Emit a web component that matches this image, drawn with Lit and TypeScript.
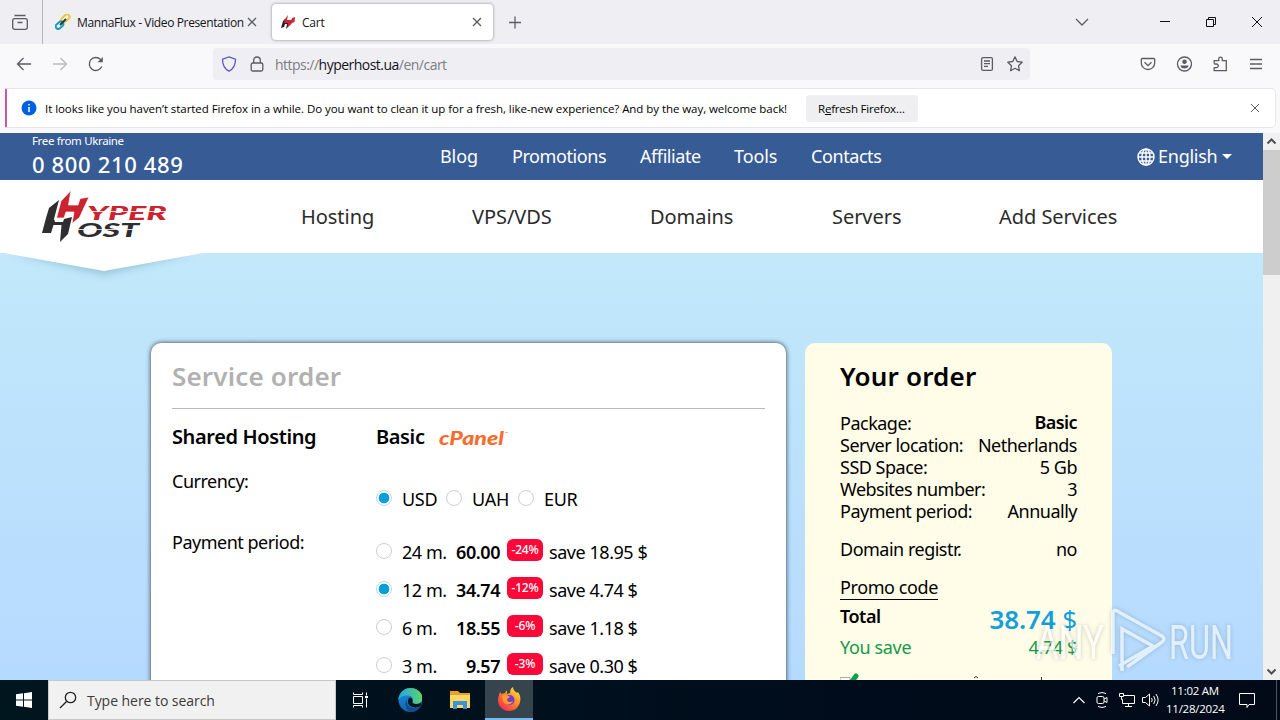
import { LitElement, html, svg, css } from 'lit';
import { customElement } from 'lit/decorators.js';
import { classMap } from 'lit/directives/class-map.js';

@customElement('browser-bar')
export class BrowserBar extends LitElement {
  static styles = css`
    :host {
      display: block;
      height: 133px;
      background: #f9f9fb;
      color: #15141a;
      font-family: 'Open Sans', 'Noto Sans', sans-serif;
      font-size: 12px;
    }
    svg {
      display: block;
      flex: none;
      fill: none;
      stroke: #5b5b66;
      stroke-width: 1.3;
    }
    .tabs {
      display: flex;
      height: 44px;
      background: #efeff3;
    }
    .view {
      box-sizing: border-box;
      width: 43px;
      padding: 14px 0 0 12px;
      border-right: 1px solid #b5b5bb;
    }
    .tab {
      display: flex;
      align-items: center;
      box-sizing: border-box;
      height: 36px;
      margin: 4px 0 0;
    }
    .tab svg {
      margin-right: 6px;
    }
    .tab.first {
      width: 223px;
      margin-left: 5px;
      padding-left: 7px;
    }
    .tab.current {
      width: 221px;
      margin-left: 1px;
      padding-left: 8px;
      border-radius: 4px;
      background: #fff;
      box-shadow: 0 0 3px rgba(0, 0, 0, 0.45);
    }
    .title {
      flex: none;
      white-space: nowrap;
    }
    .first .title {
      width: 170px;
      letter-spacing: -0.37px;
    }
    .current .title {
      width: 170px;
      letter-spacing: -0.2px;
    }
    .tab .close {
      margin: 0;
    }
    .plus {
      margin: 16px 0 0 16px;
    }
    .window {
      display: flex;
      margin: 14px 15px 0 auto;
    }
    .window svg {
      stroke: #111;
      stroke-width: 1;
    }
    .window .down {
      margin-right: 68px;
      stroke: #5b5b66;
      stroke-width: 1.3;
    }
    .window .min,
    .window .max {
      margin-right: 30px;
    }
    .tools {
      display: flex;
      align-items: center;
      height: 40px;
      padding: 0 16px;
    }
    .tools .reload {
      margin-left: 20px;
    }
    .tools .forward {
      margin-left: 20px;
      opacity: 0.4;
    }
    .address {
      display: flex;
      align-items: center;
      box-sizing: border-box;
      width: 817px;
      height: 32px;
      margin: 0 auto 0 109px;
      padding: 0 7px 0 8px;
      background: #efeff3;
      border-radius: 4px;
    }
    .lock {
      margin: 0 10px 0 12px;
    }
    .url {
      flex: 1;
      color: #7d7d85;
      font-size: 14px;
      letter-spacing: -0.52px;
    }
    .url b {
      color: #15141a;
      font-weight: 400;
    }
    .star {
      margin-left: 12px;
    }
    .menu {
      display: flex;
      gap: 20px;
    }
    .notice {
      display: flex;
      align-items: center;
      box-sizing: border-box;
      height: 40px;
      margin: 4px 4px 0 5px;
      padding-left: 14px;
      border: 1px solid #e6e6ea;
      border-left: 2px solid #d0549c;
      border-radius: 2px 5px 5px 2px;
      background: #fff;
      color: #000;
    }
    .notice .message {
      flex: none;
      width: 761px;
      margin-left: 8px;
      white-space: nowrap;
      font-size: 11.5px;
      letter-spacing: -0.055px;
    }
    .notice .refresh {
      box-sizing: border-box;
      width: 112px;
      height: 27px;
      padding-left: 12px;
      border-radius: 4px;
      background: #efeff1;
      line-height: 28px;
      font-size: 11.5px;
      letter-spacing: -0.2px;
      white-space: nowrap;
    }
    .notice .dismiss {
      margin: 0 15px 0 auto;
      stroke-width: 1;
    }
  `;

  render() {
    return html`
      <div class="tabs">
        <div class="view">
          <svg width="16" height="17" viewBox="0 0 16 17">
            <rect x=".7" y="4.7" width="14.6" height="10.6" rx="2" />
            <path d="M2.5 1.5h11M5.5 8.5h5" />
          </svg>
        </div>
        <div class="tab first">
          <svg width="16" height="16" viewBox="0 0 16 16">
            <rect x="8" y="-.2" width="5" height="9" rx="2.5" transform="rotate(48 10.5 4.3)" stroke="#e9c93c" stroke-width="2" />
            <rect x="2" y="7" width="5" height="8.4" rx="2.5" transform="rotate(48 4.5 11.2)" stroke="#1a9db8" stroke-width="2" />
            <path d="M5 11l6-6" stroke="#33343c" stroke-width="1.8" />
          </svg>
          <span class="title">MannaFlux - Video Presentation</span>
          <svg class="close" width="10" height="10" viewBox="0 0 10 10"><path d="M1 1l8 8M9 1l-8 8" /></svg>
        </div>
        <div class="tab current">
          <svg width="16" height="16" viewBox="0 0 16 16">
            <path d="M5 5L3 7 1 14l3-1 1-3h2l-1 5 3-3 1-4" fill="#2b2024" stroke="none" />
            <path d="M8 1L5 5 4 9h4l-.5 4 3-2 1.500-2 2.500-1 .5-5-3 1-.5 2H7z" fill="#c6283a" stroke="none" />
          </svg>
          <span class="title">Cart</span>
          <svg class="close" width="10" height="10" viewBox="0 0 10 10"><path d="M1 1l8 8M9 1l-8 8" /></svg>
        </div>
        <svg class="plus" width="12" height="13" viewBox="0 0 12 13"><path d="M6 .5v12M0 6.500h12" /></svg>
        <div class="window">
          <svg class="down" width="14" height="14" viewBox="0 0 14 14"><path d="M1 5l6 6 6-6" /></svg>
          <svg class="min" width="16" height="14" viewBox="0 0 16 14"><path d="M3 7.500h10" /></svg>
          <svg class="max" width="16" height="16" viewBox="0 0 16 16">
            <path d="M3.500 5.500h7v7h-7zM5.500 5.500v-2h7v7h-2" />
          </svg>
          <svg width="16" height="16" viewBox="0 0 16 16"><path d="M3 3l10 10M13 3L3 13" /></svg>
        </div>
      </div>
      <div class="tools">
        <svg width="16" height="16" viewBox="0 0 16 16"><path d="M15 8H1.500M7.500 2l-6 6 6 6" /></svg>
        <svg class="forward" width="16" height="16" viewBox="0 0 16 16"><path d="M1 8h13.500M8.500 2l6 6-6 6" /></svg>
        <svg class="reload" width="16" height="16" viewBox="0 0 16 16">
          <path d="M13.800 10.500A6.500 6.500 0 1 1 12.500 3.500L14 5" />
          <path d="M14.800 1v5.200H9.600z" fill="#5b5b66" stroke="none" />
        </svg>
        <div class="address">
          <svg width="16" height="16" viewBox="0 0 16 16">
            <path stroke="#5a58c0" d="M8 .9l6.500 2.300c0 5.200-1.500 9.400-6.500 12C3 12.600 1.500 8.400 1.500 3.200z" />
          </svg>
          <svg class="lock" width="16" height="16" viewBox="0 0 16 16">
            <rect x="2.200" y="7" width="11.600" height="8" rx="1.500" />
            <path d="M4.700 7V4.300a3.300 3.300 0 0 1 6.600 0V7" />
          </svg>
          <span class="url">https://<b>hyperhost.ua</b>/en/cart</span>
          <svg width="16" height="16" viewBox="0 0 16 16">
            <rect x="2.600" y="1.600" width="10.800" height="12.800" rx="1.500" />
            <path d="M5 5h6M5 7.700h6M5 10.400h4" />
          </svg>
          <svg class="star" width="16" height="16" viewBox="0 0 16 16">
            <path stroke-linejoin="round" d="M8 .9l2.200 4.600 5 .7-3.700 3.500.9 5L8 12.300l-4.400 2.400.9-5L.8 6.200l5-.7z" />
          </svg>
        </div>
        <div class="menu">
          <svg width="16" height="16" viewBox="0 0 16 16">
            <path d="M2.300 2.500h11.400c.7 0 1 .4 1 1V7A6.700 6.500 0 0 1 1.300 7V3.500c0-.6.3-1 1-1zM4.500 6.300L8 9.600l3.500-3.300" />
          </svg>
          <svg width="16" height="16" viewBox="0 0 16 16">
            <circle cx="8.500" cy="8" r="7" />
            <circle cx="8.500" cy="5.800" r="2.300" fill="#5b5b66" stroke="none" />
            <path d="M4.300 9.500h8.400c-.5 2-2 3-4.200 3s-3.700-1-4.200-3z" fill="#5b5b66" stroke="none" />
          </svg>
          <svg width="16" height="16" viewBox="0 0 16 16">
            <path d="M2.200 7.500V4.700h4.500V3a1.800 1.800 0 0 1 3.600 0v1.700h4v10H2.200v-3h2.200a1.800 1.800 0 0 0 0-3.700H2.200" />
          </svg>
          <svg width="16" height="16" viewBox="0 0 16 16"><path d="M2 3.500h12M2 8h12M2 12.500h12" /></svg>
        </div>
      </div>
      <div class="notice">
        <svg width="16" height="16" viewBox="0 0 16 16">
          <circle cx="8" cy="8" r="7.500" fill="#0060df" stroke="none" />
          <path d="M8 7v5M8 4v1.600" stroke="#fff" stroke-width="1.500" />
        </svg>
        <span class="message">It looks like you haven’t started Firefox in a while. Do you want to clean it up for a fresh, like-new experience? And by the way, welcome back!</span>
        <span class="refresh">R<u>e</u>fresh Firefox…</span>
        <svg class="dismiss" width="10" height="10" viewBox="0 0 10 10"><path d="M1 1l8 8M9 1l-8 8" /></svg>
      </div>
    `;
  }
}

interface Period {
  term: string;
  price: string;
  off: string;
  save: string;
  checked?: boolean;
}

@customElement('cart-page')
export class CartPage extends LitElement {
  static styles = css`
    :host {
      display: flex;
      height: 547px;
      overflow: hidden;
      font-family: 'Noto Sans', sans-serif;
      font-size: 18px;
      letter-spacing: -0.5px;
      color: #000;
    }
    .page {
      width: 1263px;
      background: linear-gradient(#c2e8fa 120px, #b5daff 547px);
    }
    .top {
      display: grid;
      grid-template-columns: 408px 72px 128px 94px 77px 326px 1fr;
      height: 47px;
      padding-left: 32px;
      background: #375b95;
      color: #fff;
      letter-spacing: -0.42px;
      line-height: 47px;
      white-space: nowrap;
    }
    .top .short {
      letter-spacing: -0.1px;
    }
    .phone {
      font-size: 22px;
      font-weight: 500;
      line-height: 30px;
      letter-spacing: 0.65px;
    }
    .phone small {
      display: block;
      height: 16px;
      font-size: 11.5px;
      font-weight: 400;
      line-height: 16px;
      letter-spacing: -0.35px;
    }
    .lang {
      display: flex;
      align-items: center;
      gap: 4px;
      letter-spacing: -0.25px;
    }
    .lang .globe {
      margin-right: -1px;
    }
    .header {
      position: relative;
      display: grid;
      grid-template-columns: 259px 171px 178px 182px 167px 1fr;
      height: 73px;
      padding-left: 42px;
      background: #fff;
      color: #2b2b2b;
      font-size: 20px;
      line-height: 73px;
      letter-spacing: -0.05px;
      white-space: nowrap;
    }
    .logo {
      margin-top: 9px;
      letter-spacing: 0;
    }
    .flap {
      position: absolute;
      left: 0;
      top: 73px;
    }
    .content {
      display: flex;
      align-items: flex-start;
      gap: 19px;
      padding: 90px 0 0 151px;
    }
    .card {
      box-sizing: border-box;
      width: 635px;
      height: 460px;
      padding: 0 21px;
      border-radius: 10px;
      background: #fff;
      box-shadow: 0 0 5px rgba(0, 0, 0, 0.75);
    }
    h2 {
      margin: 0;
      font-size: 26px;
      font-weight: 600;
      line-height: 66px;
      letter-spacing: 0.18px;
      white-space: nowrap;
    }
    .card h2 {
      height: 65px;
      border-bottom: 1px solid #b9b9b9;
      color: #b1b1b1;
    }
    .form {
      display: grid;
      grid-template-columns: 204px 1fr;
    }
    .strong {
      height: 56px;
      font-size: 20px;
      font-weight: 600;
      line-height: 56px;
      letter-spacing: -0.38px;
    }
    .strong.plan {
      display: flex;
      align-items: center;
    }
    .cpanel {
      margin: 3px 0 0 13px;
      letter-spacing: 0;
    }
    .label {
      line-height: 32px;
    }
    .currencies {
      display: flex;
      height: 61px;
      padding-top: 17px;
      box-sizing: border-box;
    }
    .currencies label {
      display: flex;
      width: 70px;
      line-height: 34px;
      letter-spacing: -0.3px;
    }
    .currencies label + label {
      width: 72px;
    }
    .radio {
      flex: none;
      box-sizing: border-box;
      width: 16px;
      height: 16px;
      margin: 8px 10px 0 0;
      border: 1px solid #cdcdcd;
      border-radius: 50%;
      background: #fff;
    }
    .radio.on {
      border-color: #b5dcf2;
      background: radial-gradient(circle, #069fdc 5px, #fff 5.7px);
    }
    .periods {
      padding-top: 7px;
    }
    .period {
      display: grid;
      grid-template-columns: 26px 48px 50px 7px 36px 6px 1fr;
      height: 38px;
      line-height: 38px;
      letter-spacing: -0.45px;
      white-space: nowrap;
    }
    .period .radio {
      margin-top: 10px;
    }
    .price {
      font-weight: 600;
      text-align: right;
    }
    .off {
      grid-column: 5;
      height: 22px;
      margin-top: 6px;
      border-radius: 6px;
      background: #fa0837;
      color: #fff;
      font-size: 12px;
      font-weight: 500;
      line-height: 22px;
      letter-spacing: -0.2px;
      text-align: center;
    }
    .save {
      grid-column: 7;
    }
    .summary {
      box-sizing: border-box;
      width: 307px;
      height: 460px;
      padding: 0 35px;
      border-radius: 10px;
      background: #fffde8;
      white-space: nowrap;
    }
    .summary h2 {
      height: 69px;
    }
    .line {
      display: flex;
      justify-content: space-between;
      height: 22px;
      line-height: 22px;
    }
    .line.gap {
      margin-top: 16px;
    }
    .bold {
      font-weight: 600;
    }
    .package .bold {
      line-height: 21px;
      letter-spacing: -0.6px;
    }
    .promo {
      display: inline-block;
      height: 23px;
      border-bottom: 1px solid #000;
      line-height: 22px;
      letter-spacing: -0.4px;
    }
    .line.total {
      height: 36px;
      padding-top: 7px;
      box-sizing: border-box;
    }
    .sum {
      color: #139fdc;
      font-size: 26px;
      line-height: 29px;
      letter-spacing: -0.1px;
    }
    .line.saved {
      color: #149a48;
      line-height: 26px;
      height: 36px;
      letter-spacing: -0.35px;
    }
    .scroll {
      display: flex;
      flex-direction: column;
      width: 17px;
      background: #f0f0f0;
    }
    .thumb {
      height: 125px;
      margin-bottom: auto;
      background: #cdcdcd;
    }
  `;

  private periods: Period[] = [
    { term: '24 m.', price: '60.00', off: '-24%', save: '18.95' },
    { term: '12 m.', price: '34.74', off: '-12%', save: '4.74', checked: true },
    { term: '6 m.', price: '18.55', off: '-6%', save: '1.18' },
    { term: '3 m.', price: '9.57', off: '-3%', save: '0.30' },
  ];

  private details = [
    ['Server location:', 'Netherlands'],
    ['SSD Space:', '5 Gb'],
    ['Websites number:', '3'],
    ['Payment period:', 'Annually'],
  ];

  private radio(on = false) {
    return html`<span class=${classMap({ radio: true, on })}></span>`;
  }

  private logo() {
    return svg`
      <path fill="#2e2e31" d="M17 11L7 19 4 29 0 44h9l2.500-8h8L18 53l8-8 4-17-8 2-1 3h-8l-1-3z" />
      <path fill="#cb2431" stroke="#fff" stroke-width=".7" d="M29 1.500L19 12l-4.500 17H22l2-6h8l-2 11.500 7.500-6L47 8l-9 1.500-2 6.500H26.500z" />
      <g font-family="Lato, sans-serif" font-weight="900" font-style="italic">
        <text x="45" y="31" font-size="19.500" fill="#cb2431" textLength="80" lengthAdjust="spacingAndGlyphs">YPER</text>
        <text x="35" y="48" font-size="19" fill="#2e2e31" textLength="62" lengthAdjust="spacingAndGlyphs">OST</text>
      </g>
      <path stroke="#fff" stroke-width=".8" d="M50 22.500h76M36 40.500h62" />
    `;
  }

  render() {
    return html`
      <div class="page">
        <div class="top">
          <div class="phone"><small>Free from Ukraine</small>0 800 210 489</div>
          <span class="short">Blog</span><span>Promotions</span><span>Affiliate</span><span class="short">Tools</span><span>Contacts</span>
          <div class="lang">
            <svg class="globe" width="18" height="18" viewBox="0 0 18 18" fill="none" stroke="#fff" stroke-width="1.4">
              <circle cx="9" cy="9" r="8" />
              <ellipse cx="9" cy="9" rx="4" ry="8" />
              <path d="M9 1v16M1 9h16M2.500 5h13M2.500 13h13" />
            </svg>
            <span>English</span>
            <svg width="10" height="5" viewBox="0 0 10 5"><path d="M0 0h10L5 5z" fill="#fff" /></svg>
          </div>
        </div>
        <div class="header">
          <svg class="logo" width="128" height="54" viewBox="0 0 128 54">${this.logo()}</svg>
          <span>Hosting</span><span>VPS/VDS</span><span>Domains</span><span>Servers</span><span>Add Services</span>
          <svg class="flap" width="210" height="36" viewBox="0 0 210 36">
            <defs>
              <filter id="soft" x="-10%" y="-50%" width="120%" height="260%"><feGaussianBlur stdDeviation="4" /></filter>
            </defs>
            <path d="M12 0h180l-88 22z" fill="#5d8fa8" opacity=".4" filter="url(#soft)" />
            <path d="M4 0h199l-99 18z" fill="#fff" />
          </svg>
        </div>
        <div class="content">
          <section class="card">
            <h2>Service order</h2>
            <div class="form">
              <div class="strong">Shared Hosting</div>
              <div class="strong plan">
                Basic
                <svg class="cpanel" width="74" height="20" viewBox="0 0 74 20">
                  <text x="1" y="15.500" font-family="Lato, sans-serif" font-size="18" font-weight="900" font-style="italic"
                    fill="#f86d2d" textLength="65" lengthAdjust="spacingAndGlyphs">cPanel</text>
                  <path d="M67 3.500h3" stroke="#f9b393" />
                </svg>
              </div>
              <div class="label">Currency:</div>
              <div class="currencies">
                <label>${this.radio(true)}USD</label>
                <label>${this.radio()}UAH</label>
                <label>${this.radio()}EUR</label>
              </div>
              <div class="label">Payment period:</div>
              <div class="periods">
                ${this.periods.map(
                  (p) => html`
                    <label class="period">
                      ${this.radio(p.checked)}
                      <span>${p.term}</span>
                      <span class="price">${p.price}</span>
                      <span class="off">${p.off}</span>
                      <span class="save">save ${p.save} $</span>
                    </label>
                  `
                )}
              </div>
            </div>
          </section>
          <section class="summary">
            <h2>Your order</h2>
            <div class="line package"><span>Package:</span><span class="bold">Basic</span></div>
            ${this.details.map(([name, value]) => html`<div class="line"><span>${name}</span><span>${value}</span></div>`)}
            <div class="line gap"><span>Domain registr.</span><span>no</span></div>
            <div class="line gap"><span class="promo">Promo code</span></div>
            <div class="line total"><span class="bold">Total</span><span class="sum"><span class="bold">38.74</span> $</span></div>
            <div class="line saved"><span>You save</span><span>4.74 $</span></div>
            <svg width="237" height="20" viewBox="0 0 237 20">
              <path d="M0 7.500h10v14H0z" fill="none" stroke="#aaa" />
              <path d="M4 14l4 3L16 6" fill="none" stroke="#11a04a" stroke-width="5" stroke-linecap="round" />
              <path d="M134 8l2-1.500 2 1.500M201.500 7v3" fill="none" stroke="#333" />
            </svg>
          </section>
        </div>
      </div>
      <div class="scroll">
        <svg width="17" height="17" viewBox="0 0 17 17"><path d="M4.500 10.500l4-4 4 4" fill="none" stroke="#505050" stroke-width="2" /></svg>
        <div class="thumb"></div>
        <svg width="17" height="17" viewBox="0 0 17 17"><path d="M4.500 6.500l4 4 4-4" fill="none" stroke="#505050" stroke-width="2" /></svg>
      </div>
    `;
  }
}

@customElement('task-bar')
export class TaskBar extends LitElement {
  static styles = css`
    :host {
      display: flex;
      height: 40px;
      background: linear-gradient(90deg, #00161f, #000d1c 60%, #020a18);
      color: #fff;
      font-family: 'Open Sans', 'Noto Sans', sans-serif;
    }
    svg {
      display: block;
      fill: none;
      stroke: #fff;
    }
    .start {
      width: 48px;
      padding: 12px 0 0 16px;
      box-sizing: border-box;
    }
    .search {
      display: flex;
      align-items: center;
      box-sizing: border-box;
      width: 288px;
      border: 1px solid #c4c8ca;
      padding-left: 10px;
      background: #f1f1f1;
      color: #3b3b3b;
      font-size: 14px;
      letter-spacing: -0.05px;
      white-space: nowrap;
    }
    .search svg {
      margin-right: 10px;
      stroke: #222;
      stroke-width: 1.3;
    }
    .apps {
      display: flex;
    }
    .app {
      display: flex;
      align-items: center;
      justify-content: center;
      box-sizing: border-box;
      width: 50px;
      height: 40px;
    }
    .app:first-child {
      width: 49px;
    }
    .app.active {
      width: 48px;
      border-bottom: 2px solid #76b9ed;
      background: #35444d;
    }
    .tray {
      display: flex;
      align-items: center;
      gap: 7px;
      margin-left: auto;
    }
    .volume {
      margin-left: -2px;
    }
    .clock {
      width: 58px;
      font-size: 11.5px;
      line-height: 18px;
      letter-spacing: -0.25px;
      text-align: center;
      white-space: nowrap;
    }
    .action {
      margin: 0 20px 0 7px;
    }
    .edge {
      width: 4px;
      height: 40px;
      border-left: 1px solid #4a5560;
      box-sizing: border-box;
      margin-left: -7px;
    }
  `;

  render() {
    return html`
      <div class="start">
        <svg width="16" height="16" viewBox="0 0 16 16">
          <path d="M0 2.300L7 1.300v6.200H0zM8 1.200L16 0v7.500H8zM0 8.500h7v6.200l-7-1zM8 8.500h8V16l-8-1.200z" fill="#fff" stroke="none" />
        </svg>
      </div>
      <div class="search">
        <svg width="18" height="18" viewBox="0 0 18 18">
          <circle cx="11.500" cy="6.500" r="5.200" />
          <path d="M7.800 10.200L1 17" />
        </svg>
        Type here to search
      </div>
      <div class="apps">
        <div class="app">
          <svg width="18" height="18" viewBox="0 0 18 18">
            <path d="M1.500 5.500h9v7h-9zM1.500 1.500v2h9v-2M1.500 16.500v-2h9v2M14.500 1.500v3M14.500 7.500v9" />
            <path d="M13 6h3" stroke-width="2" />
          </svg>
        </div>
        <div class="app">
          <svg width="24" height="24" viewBox="-.5 0 24 24">
            <defs>
              <linearGradient id="wave" x1="0" x2="1"><stop offset="0" stop-color="#20a7e0" /><stop offset="1" stop-color="#5fd568" /></linearGradient>
              <linearGradient id="deep" x2="0" y2="1"><stop stop-color="#1b8fe0" /><stop offset="1" stop-color="#1164b4" /></linearGradient>
            </defs>
            <g stroke="none">
              <circle cx="12" cy="12" r="12" fill="url(#deep)" />
              <path d="M0 10C2 3 7 0 12 0c7 0 12 5 12 10 0 4-3 6-6 6-3 0-4.500-1-4-2 1.500-3 0-6-4-6.500C6 7 2 8 0 12z" fill="url(#wave)" />
              <path d="M9 11c-2 5 2 10 8 9 2 0 4-1 5-2-2 4-6 6-10 6-5-2-7-9-3-13z" fill="#124c8c" />
              <path d="M10.500 10c2-1 4 1 3.500 3.500-.5 1.500 1 2.500 4 2.500 2 0 4-.7 5.500-2.200L22 18c-5 3-12 1-12.500-4 0-1.500.3-3 1-4z" fill="#00161f" />
            </g>
          </svg>
        </div>
        <div class="app">
          <svg width="22" height="20" viewBox="0 0 22 20">
            <g stroke="none">
              <path d="M1 1h8l2 2h10v15H1z" fill="#e8a325" />
              <path d="M1 5h20v13H1z" fill="#fed766" />
              <path d="M4 19v-8h14v8h-4v-4H8v4z" fill="#3a93d8" />
            </g>
          </svg>
        </div>
        <div class="app active">
          <svg width="24" height="24" viewBox="0 0 24 24">
            <defs>
              <linearGradient id="flame" x1="1" x2=".2" y2="1">
                <stop offset=".1" stop-color="#ffe141" /><stop offset=".5" stop-color="#ff8a27" /><stop offset="1" stop-color="#f7255a" />
              </linearGradient>
            </defs>
            <g stroke="none">
              <path d="M3 5l1.500 2L8 6c0-1 1-2 2-2.500V7l3-1c0-3 1-5 3-6 0 3 2 4 4 6l1-1c2 3 3 6 2 10-1 5-5 9-11 9S1 19 1 14c0-4 1-6 2-9z" fill="url(#flame)" />
              <circle cx="12.500" cy="13" r="5" fill="#6a3fd0" />
              <path d="M5 9c3-2 6-1 8 1l-3 2c0 3 3 4 6 2-1 4-8 5-10 0z" fill="#ff9a2b" />
            </g>
          </svg>
        </div>
      </div>
      <div class="tray">
        <svg width="14" height="14" viewBox="0 0 14 14"><path d="M1.500 10L7 4.500l5.500 5.500" stroke-width="1.2" /></svg>
        <svg width="18" height="18" viewBox="0 0 18 18">
          <rect x="4" y="5.500" width="7" height="7" rx="1.500" />
          <path d="M11 8l3-1.500v5L11 10M5 2.500q4-2 8 0M5 15.500q4 2 8 0" />
        </svg>
        <svg width="18" height="16" viewBox="0 0 18 16">
          <path d="M5 3.500h11.500v8H4.500v-4M10.500 11.500v3M7 14.500h7M1.500 1.500h4v3h-4zM3.500 4.500v3h1" />
        </svg>
        <svg class="volume" width="18" height="16" viewBox="0 0 18 16">
          <path d="M1.500 5.500h3l4-3.500v12l-4-3.500h-3zM10.500 6q1.500 2 0 4M12.700 4q3 4 0 8M14.900 2q4.500 6 0 12" />
        </svg>
        <div class="clock">11:02 AM<br />11/28/2024</div>
        <svg class="action" width="18" height="18" viewBox="0 0 18 18"><path d="M1.500 2.500h15v11H11l-2 3v-3H1.500z" /></svg>
        <div class="edge"></div>
      </div>
    `;
  }
}

@customElement('app-root')
export class AppRoot extends LitElement {
  static styles = css`
    :host {
      position: relative;
      display: block;
      width: 1280px;
      height: 720px;
      overflow: hidden;
    }
    .watermark {
      position: absolute;
      left: 1030px;
      top: 600px;
      opacity: 0.6;
      filter: drop-shadow(0 0 2px rgba(70, 80, 90, 0.5));
    }
  `;

  render() {
    return html`
      <browser-bar></browser-bar>
      <cart-page></cart-page>
      <task-bar></task-bar>
      <svg class="watermark" width="210" height="80" viewBox="0 0 210 80" fill="#fff">
        <g font-family="Roboto, sans-serif" font-size="49">
          <text x="6" y="59" textLength="68" lengthAdjust="spacingAndGlyphs">ANY</text>
          <text x="139" y="59" textLength="64" lengthAdjust="spacingAndGlyphs">RUN</text>
        </g>
        <path d="M83 54V13q0-4 4-2l45 25q4 3 0 6L97 67M92 71V29l31 17-34 20" fill="none" stroke="#fff" stroke-width="3.5" />
      </svg>
    `;
  }
}
